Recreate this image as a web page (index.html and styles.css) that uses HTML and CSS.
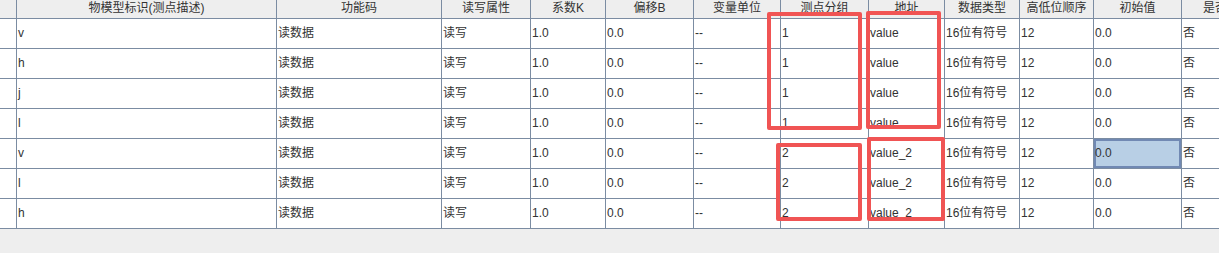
FILE: index.html
```html
<!DOCTYPE html>
<html lang="zh">
<head>
<meta charset="utf-8">
<title>点表</title>
<link rel="stylesheet" href="styles.css">
</head>
<body>
<div class="wrap">
  <div class="grid">
    <div class="h"></div><div class="h">物模型标识(测点描述)</div><div class="h">功能码</div><div class="h">读写属性</div><div class="h">系数K</div><div class="h">偏移B</div><div class="h">变量单位</div><div class="h">测点分组</div><div class="h">地址</div><div class="h">数据类型</div><div class="h">高低位顺序</div><div class="h">初始值</div><div class="h">是否启用</div>

    <div class="c"></div><div class="c">v</div><div class="c">读数据</div><div class="c">读写</div><div class="c">1.0</div><div class="c">0.0</div><div class="c">--</div><div class="c">1</div><div class="c">value</div><div class="c">16位有符号</div><div class="c">12</div><div class="c">0.0</div><div class="c">否</div>

    <div class="c"></div><div class="c">h</div><div class="c">读数据</div><div class="c">读写</div><div class="c">1.0</div><div class="c">0.0</div><div class="c">--</div><div class="c">1</div><div class="c">value</div><div class="c">16位有符号</div><div class="c">12</div><div class="c">0.0</div><div class="c">否</div>

    <div class="c"></div><div class="c">j</div><div class="c">读数据</div><div class="c">读写</div><div class="c">1.0</div><div class="c">0.0</div><div class="c">--</div><div class="c">1</div><div class="c">value</div><div class="c">16位有符号</div><div class="c">12</div><div class="c">0.0</div><div class="c">否</div>

    <div class="c"></div><div class="c">l</div><div class="c">读数据</div><div class="c">读写</div><div class="c">1.0</div><div class="c">0.0</div><div class="c">--</div><div class="c">1</div><div class="c">value</div><div class="c">16位有符号</div><div class="c">12</div><div class="c">0.0</div><div class="c">否</div>

    <div class="c"></div><div class="c">v</div><div class="c">读数据</div><div class="c">读写</div><div class="c">1.0</div><div class="c">0.0</div><div class="c">--</div><div class="c">2</div><div class="c">value_2</div><div class="c">16位有符号</div><div class="c">12</div><div class="c sel">0.0</div><div class="c">否</div>

    <div class="c"></div><div class="c">l</div><div class="c">读数据</div><div class="c">读写</div><div class="c">1.0</div><div class="c">0.0</div><div class="c">--</div><div class="c">2</div><div class="c">value_2</div><div class="c">16位有符号</div><div class="c">12</div><div class="c">0.0</div><div class="c">否</div>

    <div class="c"></div><div class="c">h</div><div class="c">读数据</div><div class="c">读写</div><div class="c">1.0</div><div class="c">0.0</div><div class="c">--</div><div class="c">2</div><div class="c">value_2</div><div class="c">16位有符号</div><div class="c">12</div><div class="c">0.0</div><div class="c">否</div>
  </div>

  <div class="mark m1"></div>
  <div class="mark m2"></div>
  <div class="mark m3"></div>
  <div class="mark m4"></div>
</div>
</body>
</html>
```

FILE: styles.css
```css
html, body {
  margin: 0;
  padding: 0;
  background: #eeeeee;
}

body {
  width: 1219px;
  height: 253px;
  overflow: hidden;
  font-family: "Liberation Sans", "Noto Sans CJK SC", sans-serif;
  font-size: 12px;
  color: #333333;
}

.wrap {
  position: relative;
  width: 1219px;
  height: 253px;
  overflow: hidden;
}

.grid {
  display: grid;
  width: max-content;
  grid-template-columns: 16px 259px 164px 88px 74px 87px 86px 87px 75px 74px 73px 87px 90px;
  grid-template-rows: 18px repeat(7, 29px);
  gap: 1px;
  padding-bottom: 1px;
  background: #7b8ca2;
}

.h {
  background: #eeeeee;
  text-align: center;
  line-height: 17px;
  white-space: nowrap;
  overflow: hidden;
}

.c {
  background: #ffffff;
  line-height: 29px;
  padding-left: 1px;
  white-space: nowrap;
  overflow: hidden;
}

.sel {
  background: #b8cfe5;
  box-shadow: inset 0 0 0 2px #7189b3;
}

.mark {
  position: absolute;
  box-sizing: border-box;
  border: 4px solid #f05454;
  border-radius: 2px;
}

.m1 { left: 767px; top: 12px; width: 95px; height: 118px; }
.m2 { left: 866px; top: 11px; width: 75px; height: 118px; }
.m3 { left: 776px; top: 143px; width: 86px; height: 78px; }
.m4 { left: 867px; top: 137px; width: 78px; height: 84px; }
```
